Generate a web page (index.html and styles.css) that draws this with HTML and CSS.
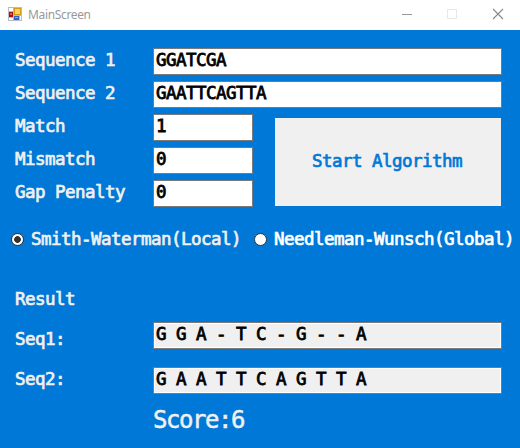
FILE: index.html
```html
<!DOCTYPE html>
<html lang="en">
<head>
<meta charset="utf-8">
<title>MainScreen</title>
<link rel="stylesheet" href="styles.css">
</head>
<body>
<header class="titlebar">
  <svg class="app-icon" width="14" height="14" viewBox="0 0 14 14" shape-rendering="crispEdges">
    <path d="M0 0h14v14H0z" fill="#b9bcc1"/>
    <path d="M1 1h4v3H1zM1 11h4v2H1z" fill="#fff"/>
    <path d="M12 9h1v4h-1z" fill="#fff"/>
    <path d="M1 5h4v5H1z" fill="#a31410"/>
    <path d="M2 6h2v2H2z" fill="#e8574b"/>
    <path d="M6 1h7v7H6z" fill="#d39a16"/>
    <path d="M7 2h5v5H7z" fill="#ffd45a"/>
    <path d="M6 9h5v4H6z" fill="#2f62cc"/>
    <path d="M7 10h3v1H7z" fill="#87aefa"/>
  </svg>
  <span class="title">MainScreen</span>
  <svg class="controls" width="102" height="12" viewBox="0 0 102 12" fill="none">
    <path d="M0 6.500h10" stroke="#999"/>
    <path d="M45.500 1.500h9v9h-9z" stroke="#e8e8e8"/>
    <path d="M91 1l10 10M101 1l-10 10" stroke="#888" stroke-width="1.100"/>
  </svg>
</header>
<main class="form">
  <section class="inputs">
    <div class="row"><span class="label">Sequence 1</span><div class="field">GGATCGA</div></div>
    <div class="row"><span class="label">Sequence 2</span><div class="field">GAATTCAGTTA</div></div>
    <div class="lower">
      <div class="params">
        <div class="row"><span class="label">Match</span><div class="field">1</div></div>
        <div class="row"><span class="label">Mismatch</span><div class="field">0</div></div>
        <div class="row"><span class="label">Gap Penalty</span><div class="field">0</div></div>
      </div>
      <button class="start">Start Algorithm</button>
    </div>
  </section>
  <section class="options">
    <div class="option"><i class="radio checked"></i>Smith-Waterman(Local)</div>
    <div class="option active"><i class="radio"></i>Needleman-Wunsch(Global)</div>
  </section>
  <section class="results">
    <div class="heading">Result</div>
    <div class="row out"><span class="label">Seq1:</span><div class="field readonly">G G A - T C - G - - A</div></div>
    <div class="row out second"><span class="label">Seq2:</span><div class="field readonly">G A A T T C A G T T A</div></div>
    <div class="score">Score:6</div>
  </section>
</main>
</body>
</html>
```
FILE: styles.css
```css
* { box-sizing: border-box; }
body {
  margin: 0;
  width: 520px;
  height: 448px;
  overflow: hidden;
  background: #0078d7;
}
.titlebar {
  display: flex;
  align-items: center;
  height: 30px;
  padding: 0 16px 0 8px;
  background: #fff;
}
.app-icon { margin-top: -2px; }
.title {
  margin-left: 6px;
  font: 12px/16px "Noto Sans", sans-serif;
  letter-spacing: -0.35px;
  color: #999;
}
.controls { margin-left: auto; margin-top: -2px; }
.form {
  padding: 18px 0 0 15px;
  font: 17.5px/24px "DejaVu Sans Mono", monospace;
  letter-spacing: -0.535px;
  color: #f0f0f0;
  -webkit-text-stroke: 0.7px currentColor;
  white-space: nowrap;
}
.row { display: flex; height: 33px; }
.label { flex: none; width: 138px; }
.field {
  flex: none;
  width: 349px;
  height: 27px;
  padding-left: 2px;
  border: 1px solid #7a7a7a;
  background: #fff;
  color: #000;
  line-height: 23px;
  -webkit-text-stroke-width: 0.8px;
}
.lower { display: flex; }
.params { width: 260px; }
.params .field { width: 100px; }
.start {
  width: 226px;
  height: 88px;
  margin: 4px 0 0;
  padding: 0 2px 2px 0;
  border: 0;
  background: #f0f0f0;
  color: #0078d7;
  font: inherit;
  letter-spacing: inherit;
}
.options {
  display: flex;
  height: 24px;
  margin: 14px 0 0 -4px;
}
.option { display: flex; flex: none; align-items: center; width: 243px; }
.active { color: #fff; }
.radio {
  flex: none;
  width: 13px;
  height: 13px;
  margin: 1px 7px 0 0;
  border: 1px solid #333;
  border-radius: 50%;
  background: #fff;
}
.checked { background: radial-gradient(circle, #333 3px, #fff 3.7px); }
.heading { height: 35px; margin-top: 36px; }
.out { height: 45px; }
.out .label { padding-top: 5px; }
.second .label { padding-top: 0; }
.readonly { background: #f0f0f0; box-shadow: inset 0 0 0 1px #fff; }
.score {
  margin: -7px 0 0 138px;
  font-size: 24px;
  line-height: 30px;
  letter-spacing: -1.45px;
  -webkit-text-stroke-width: 0.5px;
}
```
